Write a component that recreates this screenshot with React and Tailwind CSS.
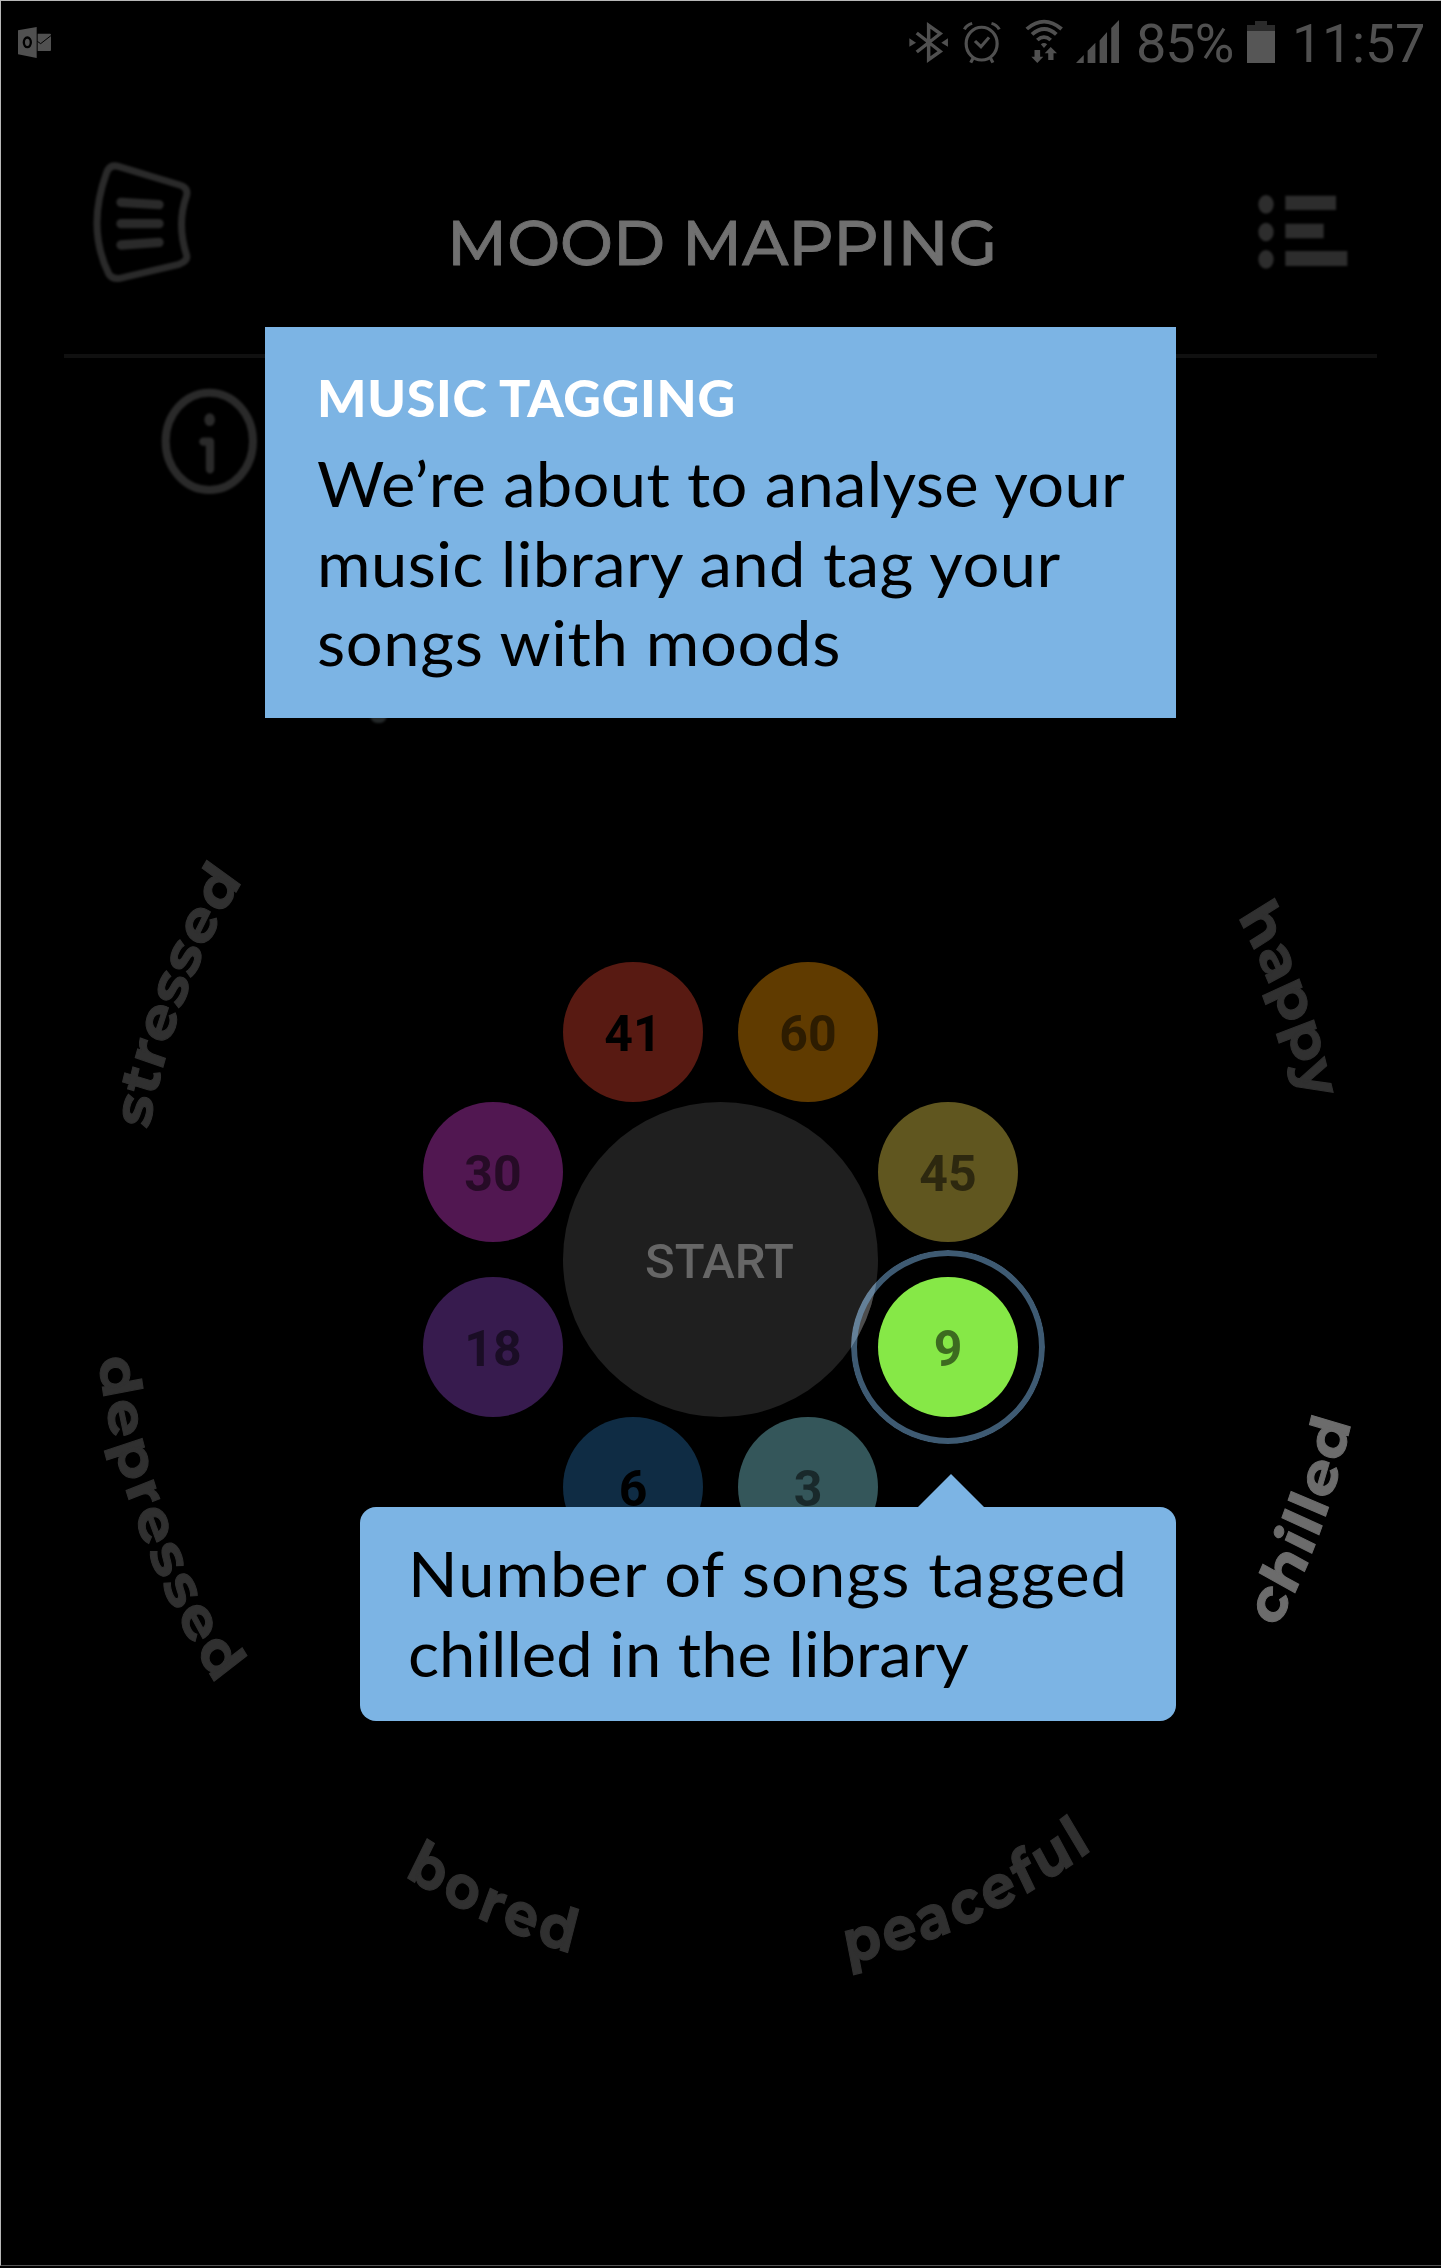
import React from "react";

const RAD = Math.PI / 180;
const R_TOP = 592;
const R_BOTTOM = 638;

const moods = [
  { word: "stressed", arc: "top", from: 11.2, to: 34.6, tone: "fill-[#303030] stroke-[#303030]" },
  { word: "happy", arc: "top", from: 149, to: 166.2, tone: "fill-[#303030] stroke-[#303030]" },
  { word: "depressed", arc: "bottom", from: 8, to: 36.4, tone: "fill-[#303030] stroke-[#303030]" },
  { word: "bored", arc: "bottom", from: 59.3, to: 75.6, tone: "fill-[#303030] stroke-[#303030]" },
  { word: "peaceful", arc: "bottom", from: 100.6, to: 124.6, tone: "fill-[#303030] stroke-[#303030]" },
  { word: "chilled", arc: "bottom", from: 148.9, to: 166.8, tone: "fill-[#6c6c6c] stroke-[#6c6c6c]" },
];

const bubbles = [
  { n: 41, place: "left-[563px] top-[962px]", tone: "bg-[#581a12] text-black" },
  { n: 60, place: "left-[738px] top-[962px]", tone: "bg-[#603b00] text-[#2d1c00]" },
  { n: 45, place: "left-[878px] top-[1102px]", tone: "bg-[#60561f] text-[#2d280f]" },
  { n: 30, place: "left-[423px] top-[1102px]", tone: "bg-[#511751] text-[#260b26]" },
  { n: 18, place: "left-[423px] top-[1277px]", tone: "bg-[#371b4e] text-[#1a0d25]" },
  { n: 6, place: "left-[563px] top-[1417px]", tone: "bg-[#0f2c44] text-black" },
  { n: 3, place: "left-[738px] top-[1417px]", tone: "bg-[#34565a] text-[#19292b]" },
];

function StatusBar() {
  return (
    <header className="flex h-[91px] items-start justify-between pr-[16px] pl-[18px] text-[#505050]">
      <svg className="mt-[27px] h-[31px] w-[33px]" viewBox="54 81 99 93">
        <path d="M54 91 110 81v93L54 163z" fill="currentColor" />
        <path d="M113 101h37q3 0 3 3v46q0 3-3 3h-37z" fill="currentColor" />
        <path d="m112 124 10 7 32-25" fill="none" stroke="#000" strokeWidth="3" />
        <ellipse cx="82" cy="127" rx="10.5" ry="14.5" fill="none" stroke="#000" strokeWidth="7" />
      </svg>
      <div className="flex items-start">
        <svg className="mt-[20px] h-[45px] w-[40px]" viewBox="50 60 114 135" preserveAspectRatio="none" fill="none" stroke="currentColor" strokeWidth="10">
          <path d="M72 99l67 55-33 25V76l33 25-67 55" />
          <path d="M51 115v25l19-12zM161 115v25l-19-12z" fill="currentColor" stroke="none" />
        </svg>
        <svg className="mt-[20px] ml-[14px] h-[45px] w-[38px]" viewBox="204 60 108 135" preserveAspectRatio="none" fill="none" stroke="currentColor" strokeWidth="9">
          <ellipse cx="257" cy="131" rx="44" ry="49" />
          <path d="M238 123l17 17 23-28M208 88q7-14 22-18M307 88q-7-14-22-18M233 174l-7 14M282 174l7 14" />
        </svg>
        <svg className="mt-[18px] ml-[24px] h-[46px] w-[38px]" viewBox="380 54 108 138" preserveAspectRatio="none" fill="none" stroke="currentColor" strokeWidth="11">
          <path d="M385 87q49-44 99 0M400 103q35-32 69 0M415 120q19-17 38 0" />
          <path d="M425 133q9-8 18 0l-9 11zM407 150h16v20h9l-17 19-17-19h9zM446 180h15v-20h10l-18-19-17 19h10z" fill="currentColor" stroke="none" />
        </svg>
        <svg className="mt-[20px] ml-[13px] h-[43px] w-[43px]" viewBox="527 59 122 130" preserveAspectRatio="none" fill="currentColor">
          <path d="M527 189l22-24v24zM560 189v-37l22-24v61zM594 189v-68l21-26v94zM627 189V83l22-24v130z" />
        </svg>
        <span className="mt-[12px] ml-[17px] w-[98px] font-[Roboto] text-[54px] leading-[64px] tracking-[-1px] whitespace-nowrap">85%</span>
        <svg className="mt-[21px] ml-[13px] h-[42px] w-[28px]" viewBox="0 0 28 42">
          <path d="M0 4h8V0h12v4h8v6H0z" fill="#2b2b2b" />
          <path d="M0 10h28v32H0z" fill="#565656" />
        </svg>
        <span className="mt-[12px] ml-[17px] font-[Roboto] text-[54px] leading-[64px] tracking-[-0.3px] whitespace-nowrap">11:57</span>
      </div>
    </header>
  );
}

function TitleBar() {
  return (
    <div className="mx-[64px] flex h-[267px] items-start justify-between border-b-4 border-[#101010] pr-[26px] pl-[27px]">
      <svg className="mt-[71px] h-[122px] w-[102px] blur-[0.8px]" viewBox="126 66 306 366" fill="none" stroke="#2a2a2a" strokeLinecap="round" strokeLinejoin="round">
        <path d="M210 80l182 55q28 9 20 34-29 82 0 174 7 18-22 30l-178 42q-20 4-32-12-68-137-8-303 10-29 38-20z" strokeWidth="21" />
        <path d="M216 187l114 7M216 251h114M216 315l114-8" strokeWidth="28" />
      </svg>
      <h1 className="mt-[110px] w-[556px] text-[63px] leading-[84px] font-medium whitespace-nowrap text-[#707070] [-webkit-text-stroke:0.9px_#707070] [font-family:Montserrat,Lato,sans-serif]">
        MOOD MAPPING
      </h1>
      <svg className="mt-[99px] h-[84px] w-[94px] blur-[1px]" viewBox="174 120 282 252" fill="#2d2d2d">
        <ellipse cx="201" cy="163" rx="23" ry="28" />
        <ellipse cx="201" cy="246" rx="23" ry="28" />
        <ellipse cx="201" cy="328" rx="23" ry="28" />
        <path d="M259 137h152v43H259zM259 221h115v44H259zM259 303h186v45H259z" />
      </svg>
    </div>
  );
}

function MoodRing() {
  return (
    <svg className="absolute inset-0 h-[2268px] w-[1441px] blur-[0.7px]" viewBox="0 0 1441 2268">
      <defs>
        <path id="top" d={`M${-R_TOP} 0A${R_TOP} ${R_TOP} 0 0 1 ${R_TOP} 0`} />
        <path id="bottom" d={`M${-R_BOTTOM} 0A${R_BOTTOM} ${R_BOTTOM} 0 0 0 ${R_BOTTOM} 0`} />
      </defs>
      <g transform="translate(730 1259) scale(1 1.124)">
        {moods.map(({ word, arc, from, to, tone }) => {
          const r = arc === "top" ? R_TOP : R_BOTTOM;
          return (
            <text key={word} className={`stroke-1 text-[54px] font-bold [font-family:Montserrat,Lato,sans-serif] ${tone}`}>
              <textPath href={`#${arc}`} startOffset={from * RAD * r} textLength={(to - from) * RAD * r}>
                {word}
              </textPath>
            </text>
          );
        })}
      </g>
    </svg>
  );
}

function Wheel() {
  return (
    <>
      <div className="absolute top-[1102px] left-[563px] flex size-[315px] items-center justify-center rounded-full bg-[#1f1f1f] pt-[4px] pr-[2px] font-[Roboto] text-[49px] font-medium text-[#666]">
        START
      </div>
      {bubbles.map(({ n, place, tone }) => (
        <div key={n} className={`absolute flex size-[140px] items-center justify-center rounded-full pt-[5px] text-[50px] font-bold [font-family:Roboto,sans-serif] ${place} ${tone}`}>
          {n}
        </div>
      ))}
      <div className="absolute top-[1250px] left-[851px] size-[194px] overflow-hidden rounded-full">
        <div className="absolute top-[-148px] left-[-288px] size-[315px] rounded-full bg-[#4d4d4d]" />
        <div className="absolute inset-0 rounded-full border-[6px] border-[#7cb4e4]/50" />
      </div>
      <div className="absolute top-[1277px] left-[878px] flex size-[140px] items-center justify-center rounded-full bg-[#86e847] pt-[5px] text-[50px] font-bold text-[#3d6b20] [font-family:Roboto,sans-serif]">
        9
      </div>
    </>
  );
}

export default function App() {
  return (
    <main className="relative flex h-[2268px] w-[1441px] flex-col overflow-hidden bg-black">
      <StatusBar />
      <TitleBar />
      <svg className="mt-[28px] ml-[160px] h-[110px] w-[100px] blur-[1px]" viewBox="330 738 300 330" fill="none" stroke="#2a2a2a">
        <ellipse cx="478" cy="904" rx="131" ry="146" strokeWidth="24" />
        <ellipse cx="479" cy="839" rx="16" ry="19" fill="#2a2a2a" stroke="none" />
        <path d="M460 905h20v83" strokeWidth="25" strokeLinecap="round" strokeLinejoin="round" />
      </svg>

      <MoodRing />
      <Wheel />
      <div className="absolute top-[708px] left-[370px] h-[15px] w-[17px] rounded-full bg-[#242829] blur-[1px]" />

      <section className="absolute top-[327px] left-[265px] flex h-[391px] w-[911px] flex-col bg-[#7cb4e4] pt-[38px] pl-[52px] [font-family:Lato,sans-serif]">
        <h2 className="text-[52px] leading-[64px] font-black tracking-[0.7px] whitespace-nowrap text-white">MUSIC TAGGING</h2>
        <p className="mt-[15px] origin-left scale-x-[1.05] text-[62px] leading-[79.5px] whitespace-nowrap text-black">
          <span className="block tracking-[0.3px]">We’re about to analyse your</span>
          <span className="block tracking-[0.4px]">music library and tag your</span>
          <span className="block tracking-[0.6px]">songs with moods</span>
        </p>
      </section>

      <section className="absolute top-[1507px] left-[360px] h-[214px] w-[816px] rounded-[16px] bg-[#7cb4e4] pt-[27px] pl-[48px] [font-family:Lato,sans-serif]">
        <svg className="absolute -top-[33px] left-[557px] h-[34px] w-[68px]" viewBox="0 0 68 34" fill="#7cb4e4">
          <path d="M34 0 68 34H0z" />
        </svg>
        <p className="origin-left scale-x-[1.05] text-[62px] leading-[79.5px] whitespace-nowrap text-black">
          <span className="block tracking-[1px]">Number of songs tagged</span>
          <span className="block">chilled in the library</span>
        </p>
      </section>
      <div className="pointer-events-none absolute inset-x-0 top-0 h-[2266px] border-t border-b border-l border-[#b8b8b8] border-b-[#555]" />
    </main>
  );
}
